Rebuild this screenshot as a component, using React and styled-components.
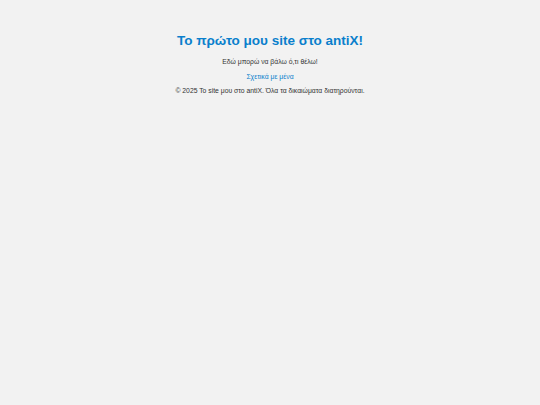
import styled, { createGlobalStyle } from 'styled-components';

const GlobalStyle = createGlobalStyle`
  html, body {
    margin: 0;
    padding: 0;
    background-color: #f2f2f2;
  }
  body {
    font-family: 'Liberation Sans', Arial, sans-serif;
    color: #333333;
    min-height: 405px;
  }
`;

const App = () => {
  return (
    <>
      <GlobalStyle />
      <Page>
        <Title>Το πρώτο μου site στο antiX!</Title>
        <Text>Εδώ μπορώ να βάλω ό,τι θέλω!</Text>
        <Nav>
          <NavLink href='#'>Σχετικά με μένα</NavLink>
        </Nav>
        <Footer>© 2025 Το site μου στο antiX. Όλα τα δικαιώματα διατηρούνται.</Footer>
      </Page>
    </>
  );
};

const Page = styled.div`
  display: flex;
  flex-direction: column;
  align-items: center;
  padding-top: 33px;
  font-size: 6.8px;
`;

const Title = styled.h1`
  margin: 0 0 10px;
  font-size: 13.5px;
  font-weight: bold;
  color: #0a7fcc;
`;

const Text = styled.p`
  margin: 0 0 8px;
`;

const Nav = styled.nav`
  margin-bottom: 7px;
`;

const NavLink = styled.a`
  color: #0a7fcc;
  text-decoration: none;
`;

const Footer = styled.footer``;

export default App;
